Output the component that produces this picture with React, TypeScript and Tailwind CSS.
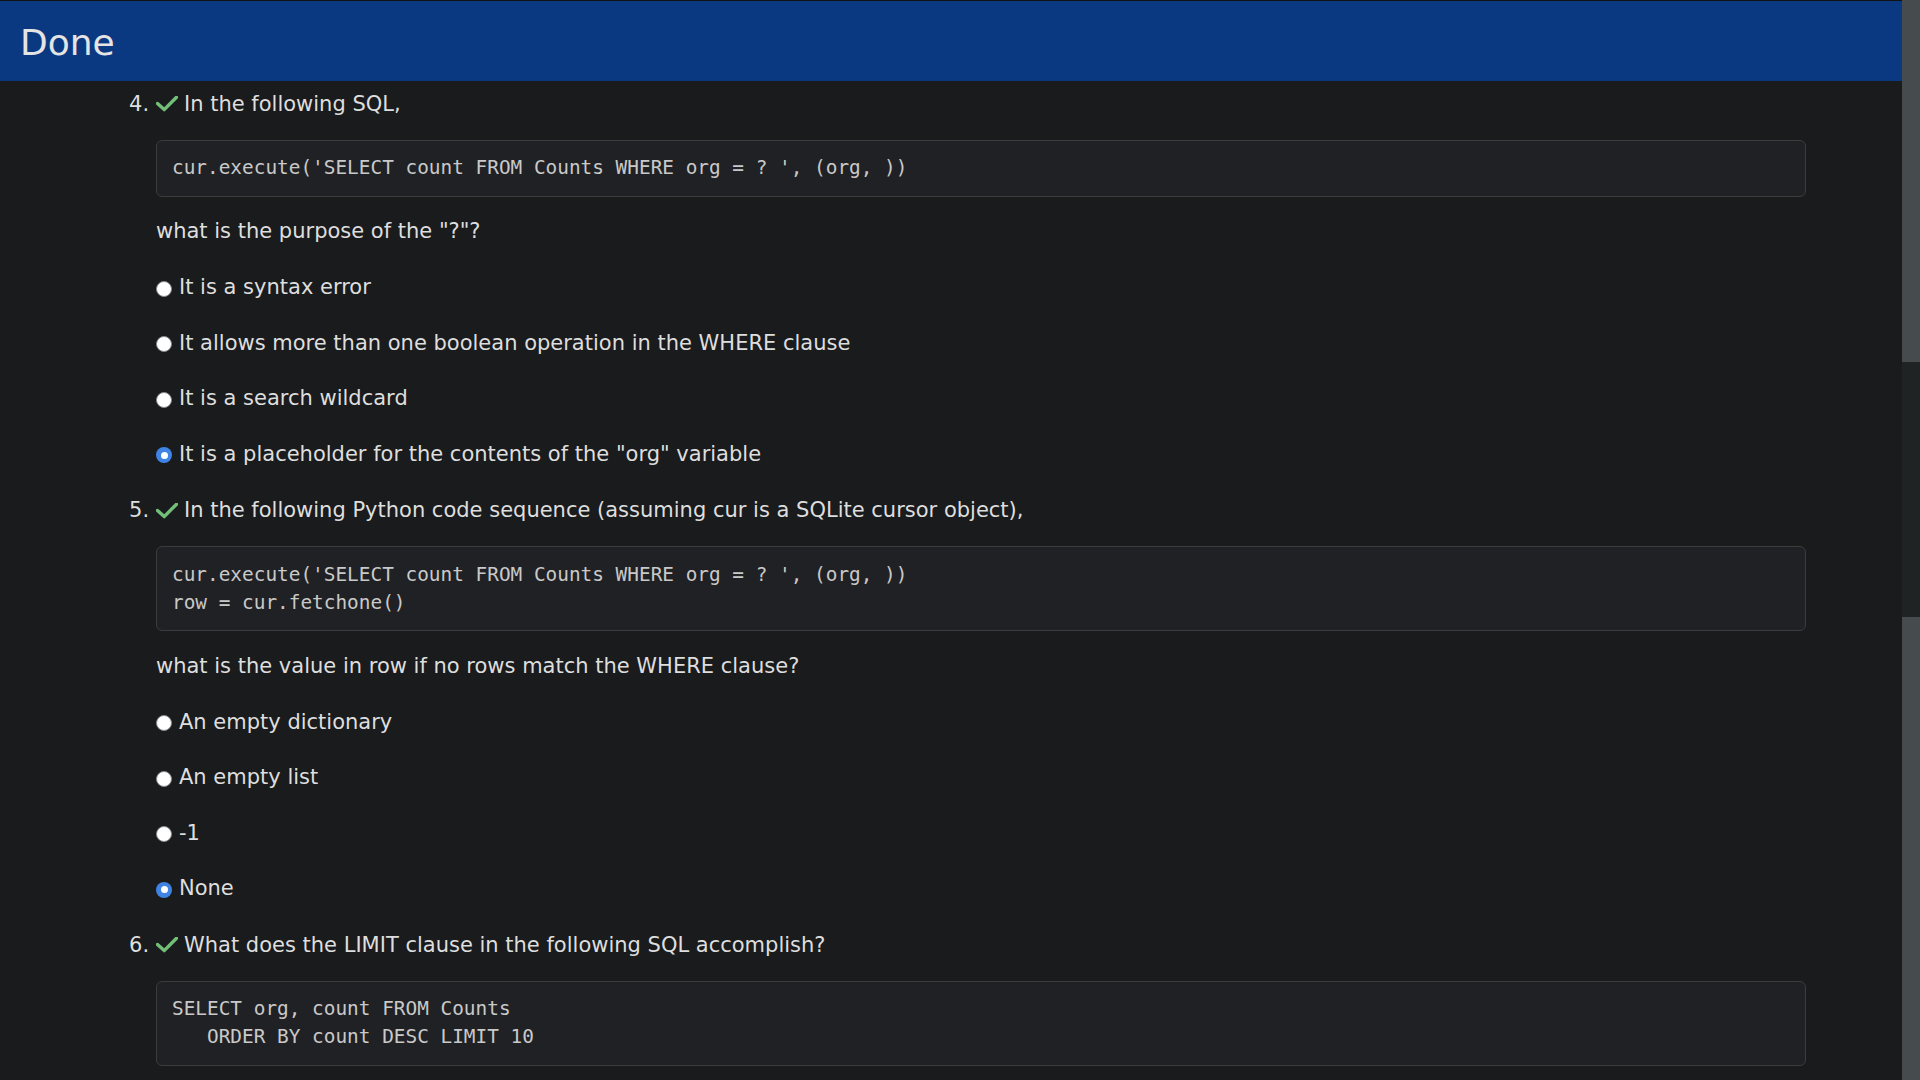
import React from "react";

type Opt = { text: string; checked?: boolean };
type Q = { n: number; title: string; code: string[]; prompt?: string; options?: Opt[] };

const questions: Q[] = [
  {
    n: 4,
    title: "In the following SQL,",
    code: ["cur.execute('SELECT count FROM Counts WHERE org = ? ', (org, ))"],
    prompt: 'what is the purpose of the "?"?',
    options: [
      { text: "It is a syntax error" },
      { text: "It allows more than one boolean operation in the WHERE clause" },
      { text: "It is a search wildcard" },
      { text: 'It is a placeholder for the contents of the "org" variable', checked: true },
    ],
  },
  {
    n: 5,
    title: "In the following Python code sequence (assuming cur is a SQLite cursor object),",
    code: ["cur.execute('SELECT count FROM Counts WHERE org = ? ', (org, ))", "row = cur.fetchone()"],
    prompt: "what is the value in row if no rows match the WHERE clause?",
    options: [
      { text: "An empty dictionary" },
      { text: "An empty list" },
      { text: "-1" },
      { text: "None", checked: true },
    ],
  },
  {
    n: 6,
    title: "What does the LIMIT clause in the following SQL accomplish?",
    code: ["SELECT org, count FROM Counts", "   ORDER BY count DESC LIMIT 10"],
  },
];

function Check() {
  return (
    <svg width="22" height="16" viewBox="0 0 22 16" className="shrink-0 mr-[6px]">
      <path d="M1.5 7.5 L8.2 13.6 L20.5 1.2" fill="none" stroke="#72bf78" strokeWidth="3.4" strokeLinecap="round" strokeLinejoin="round" />
    </svg>
  );
}

function Radio({ checked }: { checked?: boolean }) {
  if (checked) {
    return (
      <span className="shrink-0 w-[16px] h-[16px] mt-[1px] rounded-full bg-[#3f84e5] flex items-center justify-center mr-[7px]">
        <span className="w-[7px] h-[7px] rounded-full bg-white" />
      </span>
    );
  }
  return <span className="shrink-0 w-[16px] h-[16px] mt-[1px] rounded-full bg-white border border-[#8a8a8a] mr-[7px]" />;
}

export default function App() {
  return (
    <div
      className="flex w-[1920px] h-[1080px] overflow-hidden bg-[#1a1b1d] text-[#dedede]"
      style={{ fontFamily: '"DejaVu Sans", sans-serif' }}
    >
      <div className="flex-1 flex flex-col overflow-hidden">
        <div className="h-[1px] shrink-0 bg-[#111214]" />
        <div className="h-[80px] shrink-0 bg-[#0a3881] flex items-center px-[20px] pt-[3px]">
          <span className="text-[36px] leading-none text-[#e4e4e4]">Done</span>
        </div>
        <div className="shrink-0 pl-[156px] pr-[96px] pt-[7.7px] text-[21px] leading-[31.5px]">
          {questions.map((q) => (
            <div key={q.n} className="mb-[24.8px]">
              <div className="flex items-center relative">
                <span className="absolute left-[-27px] top-0">{q.n}.</span>
                <Check />
                <span>{q.title}</span>
              </div>
              <div
                className="mt-[19.5px] rounded-[6px] border border-[#3b3c3e] bg-[#202124] px-[15px] py-[13.5px] text-[19.4px] leading-[28px] text-[#c9c9c9] whitespace-pre"
                style={{ fontFamily: '"DejaVu Sans Mono", monospace' }}
              >
                {q.code.map((l, i) => (
                  <div key={i}>{l}</div>
                ))}
              </div>
              {q.prompt && <div className="mt-[19.8px]">{q.prompt}</div>}
              {q.options && (
                <div className="mt-[24.4px] flex flex-col gap-[24px]">
                  {q.options.map((o, i) => (
                    <div key={i} className="flex items-center">
                      <Radio checked={o.checked} />
                      <span>{o.text}</span>
                    </div>
                  ))}
                </div>
              )}
            </div>
          ))}
        </div>
      </div>
      <div className="w-[18px] flex flex-col shrink-0">
        <div className="h-[362px] shrink-0 bg-[#464b4e]" />
        <div className="h-[255px] shrink-0 bg-[#202324]" />
        <div className="flex-1 bg-[#464b4e]" />
      </div>
    </div>
  );
}
